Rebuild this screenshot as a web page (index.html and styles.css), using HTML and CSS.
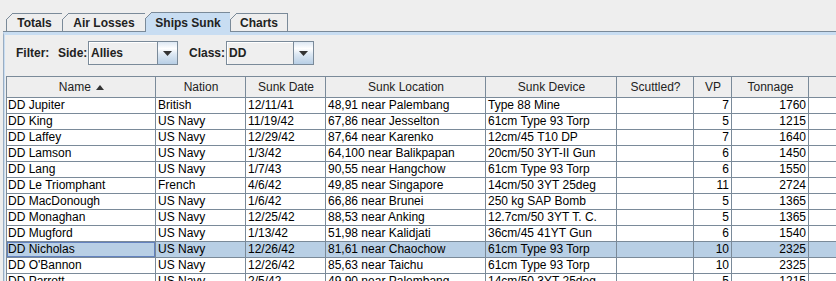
FILE: index.html
```html
<!DOCTYPE html>
<html lang="en">
<head>
<meta charset="utf-8"/>
<meta content="width=device-width, initial-scale=1.0" name="viewport"/>
<title>Ships Sunk</title>
<link rel="stylesheet" href="styles.css">
</head>
<body>
<div class="tabs">
  <div class="tab tab-totals">Totals</div>
  <div class="tab tab-air">Air Losses</div>
  <div class="tab tab-ships selected">Ships Sunk</div>
  <div class="tab tab-charts">Charts</div>
</div>
<div class="panel">
  <div class="filter">
    <span class="lbl lbl-filter">Filter:</span>
    <span class="lbl lbl-side">Side:</span>
    <div class="combo combo-side">
      <span class="combo-text">Allies</span>
      <span class="combo-btn"><svg width="9" height="5" viewBox="0 0 9 5"><path d="M0 0H9L4.5 5Z" fill="#333"/></svg></span>
    </div>
    <span class="lbl lbl-class">Class:</span>
    <div class="combo combo-class">
      <span class="combo-text">DD</span>
      <span class="combo-btn"><svg width="9" height="5" viewBox="0 0 9 5"><path d="M0 0H9L4.5 5Z" fill="#333"/></svg></span>
    </div>
  </div>
  <div class="scroll">
    <table class="grid">
      <colgroup>
        <col class="c-name"><col class="c-nation"><col class="c-date"><col class="c-loc">
        <col class="c-device"><col class="c-scut"><col class="c-vp"><col class="c-ton"><col class="c-end">
      </colgroup>
      <thead>
        <tr>
          <th>Name <svg class="sort" width="8" height="5" viewBox="0 0 8 5"><path d="M0 5H8L4 0Z" fill="#333"/></svg></th>
          <th>Nation</th><th>Sunk Date</th><th>Sunk Location</th><th>Sunk Device</th>
          <th>Scuttled?</th><th>VP</th><th>Tonnage</th><th></th>
        </tr>
      </thead>
      <tbody>
        <tr><td>DD Jupiter</td><td>British</td><td>12/11/41</td><td>48,91 near Palembang</td><td>Type 88 Mine</td><td></td><td class="num">7</td><td class="num">1760</td><td></td></tr>
        <tr><td>DD King</td><td>US Navy</td><td>11/19/42</td><td>67,86 near Jesselton</td><td>61cm Type 93 Torp</td><td></td><td class="num">5</td><td class="num">1215</td><td></td></tr>
        <tr><td>DD Laffey</td><td>US Navy</td><td>12/29/42</td><td>87,64 near Karenko</td><td>12cm/45 T10 DP</td><td></td><td class="num">7</td><td class="num">1640</td><td></td></tr>
        <tr><td>DD Lamson</td><td>US Navy</td><td>1/3/42</td><td>64,100 near Balikpapan</td><td>20cm/50 3YT-II Gun</td><td></td><td class="num">6</td><td class="num">1450</td><td></td></tr>
        <tr><td>DD Lang</td><td>US Navy</td><td>1/7/43</td><td>90,55 near Hangchow</td><td>61cm Type 93 Torp</td><td></td><td class="num">6</td><td class="num">1550</td><td></td></tr>
        <tr><td>DD Le Triomphant</td><td>French</td><td>4/6/42</td><td>49,85 near Singapore</td><td>14cm/50 3YT 25deg</td><td></td><td class="num">11</td><td class="num">2724</td><td></td></tr>
        <tr><td>DD MacDonough</td><td>US Navy</td><td>1/6/42</td><td>66,86 near Brunei</td><td>250 kg SAP Bomb</td><td></td><td class="num">5</td><td class="num">1365</td><td></td></tr>
        <tr><td>DD Monaghan</td><td>US Navy</td><td>12/25/42</td><td>88,53 near Anking</td><td>12.7cm/50 3YT T. C.</td><td></td><td class="num">5</td><td class="num">1365</td><td></td></tr>
        <tr><td>DD Mugford</td><td>US Navy</td><td>1/13/42</td><td>51,98 near Kalidjati</td><td>36cm/45 41YT Gun</td><td></td><td class="num">6</td><td class="num">1540</td><td></td></tr>
        <tr class="sel"><td class="focus">DD Nicholas</td><td>US Navy</td><td>12/26/42</td><td>81,61 near Chaochow</td><td>61cm Type 93 Torp</td><td></td><td class="num">10</td><td class="num">2325</td><td></td></tr>
        <tr><td>DD O'Bannon</td><td>US Navy</td><td>12/26/42</td><td>85,63 near Taichu</td><td>61cm Type 93 Torp</td><td></td><td class="num">10</td><td class="num">2325</td><td></td></tr>
        <tr><td>DD Parrott</td><td>US Navy</td><td>2/5/42</td><td>49,90 near Palembang</td><td>14cm/50 3YT 25deg</td><td></td><td class="num">5</td><td class="num">1215</td><td></td></tr>
      </tbody>
    </table>
  </div>
</div>
</body>
</html>
```

FILE: styles.css
```css
:root {
  --bg: #eeeeee;
  --line: #7a8a99;
  --tab-sel: #c8ddf2;
  --row-sel: #b8cfe5;
  --focus: #6382bf;
}
html, body {
  height: 281px;
  overflow: hidden;
}
body {
  margin: 0;
  background: var(--bg);
  font-family: "Liberation Sans", Arial, sans-serif;
  font-size: 12px;
  color: #000;
}

/* tabs */
.tabs {
  display: flex;
  align-items: flex-end;
  height: 19px;
  padding: 12px 0 0 3px;
  margin-left: 3px;
  border-bottom: 1px solid var(--line);
}
.tab {
  position: relative;
  box-sizing: border-box;
  height: 18px;
  border-top: 1px solid var(--line);
  border-left: 1px solid var(--line);
  display: flex;
  align-items: center;
  justify-content: center;
  font-weight: bold;
  color: #222;
  padding-top: 1px;
}
.tab::before {
  content: "";
  position: absolute;
  left: -1px;
  top: -1px;
  width: 7px;
  height: 7px;
  background: linear-gradient(to bottom right, var(--bg) calc(50% - 0.7px), var(--line) calc(50% - 0.7px), var(--line) calc(50% + 0.7px), transparent calc(50% + 0.7px));
}
.tab-totals { width: 56px; }
.tab-air { width: 83px; }
.tab-ships { width: 85px; }
.tab-charts { width: 58px; border-right: 1px solid var(--line); }
.tab.selected {
  height: 20px;
  margin-bottom: -1px;
  background: var(--tab-sel);
  padding-top: 0;
}

/* panel */
.panel {
  margin-left: 3px;
  border-top: 3px solid var(--tab-sel);
  border-left: 1px solid #9aadc2;
  box-shadow: inset 1px 0 var(--tab-sel);
}
.filter {
  display: flex;
  align-items: center;
  height: 24px;
  padding: 6px 0 11px 12px;
}
.lbl {
  font-weight: bold;
  color: #222;
}
.lbl-filter { width: 42px; }
.lbl-side { width: 30px; }
.lbl-class { width: 37px; margin-left: 11px; }
.combo {
  display: flex;
  box-sizing: border-box;
  height: 24px;
  border: 1px solid var(--line);
  background: #efefef;
}
.combo-side { width: 90px; }
.combo-class { width: 88px; }
.combo-text {
  flex: 1;
  display: flex;
  align-items: center;
  padding-left: 2px;
  font-weight: bold;
  color: #222;
  box-shadow: inset 1px 1px #fff;
}
.combo-btn {
  width: 19px;
  border-left: 1px solid var(--line);
  display: flex;
  align-items: center;
  justify-content: center;
  background: linear-gradient(#dde8f3, #ffffff 30%, #dde8f3 55%, #b8cfe5);
}

/* table */
.scroll {
  padding-left: 2px;
  overflow: hidden;
}
.grid {
  border-collapse: separate;
  border-spacing: 0;
  table-layout: fixed;
  width: 863px;
  border-top: 1px solid var(--line);
  border-left: 1px solid var(--line);
}
.c-name { width: 149px; }
.c-nation { width: 90px; }
.c-date { width: 80px; }
.c-loc { width: 160px; }
.c-device { width: 131px; }
.c-scut { width: 77px; }
.c-vp { width: 38px; }
.c-ton { width: 77px; }
.c-end { width: 60px; }
.grid th, .grid td {
  border-right: 1px solid var(--line);
  border-bottom: 1px solid var(--line);
  white-space: nowrap;
  overflow: hidden;
  padding: 0 1px 0 2px;
}
.grid th {
  font-weight: normal;
  line-height: 20px;
  color: #222;
  background: var(--bg);
}
.grid td {
  line-height: 15px;
  background: #fff;
}
.grid td:first-child { padding-left: 1px; }
.grid td.num {
  text-align: right;
  padding-right: 2px;
}
.sort {
  margin-left: 2px;
  vertical-align: 1px;
}
.grid tr.sel td { background: var(--row-sel); }
.grid tr.sel td.focus { box-shadow: inset 0 0 0 1px var(--focus); }
```
